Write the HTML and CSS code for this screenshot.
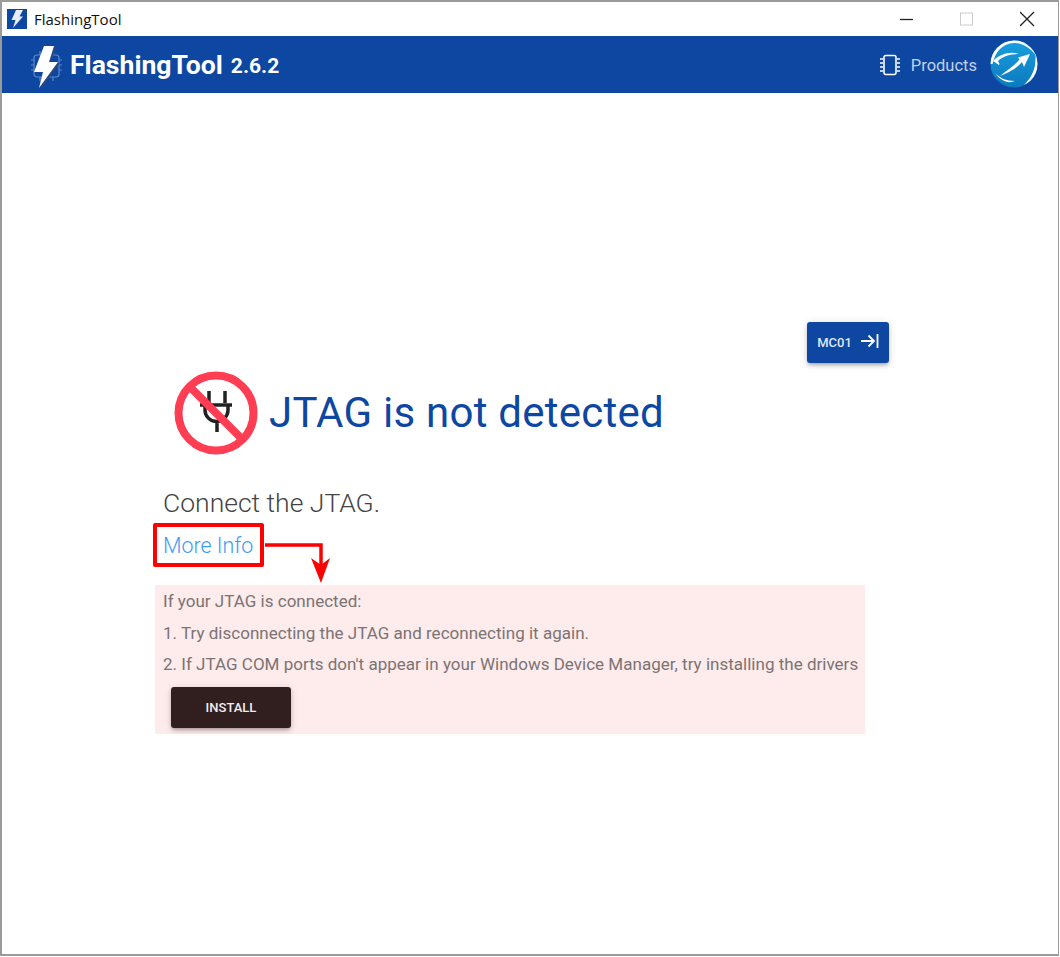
FILE: index.html
```html
<!DOCTYPE html>
<html lang="en">
<head>
<meta charset="utf-8">
<title>FlashingTool</title>
<link rel="stylesheet" href="styles.css">
</head>
<body>
<div class="window">
  <div class="titlebar">
    <svg class="title-icon" viewBox="0 0 20 20"><rect width="20" height="20" fill="#0d47a1"/><path d="M9 1h7l-3.500 6.500H16L6 19l2.500-8H4.500z" fill="#e8edf5"/></svg>
    <span class="title-text">FlashingTool</span>
    <div class="controls">
      <svg class="ctl" viewBox="0 0 60 34"><path d="M0 17.500h13" stroke="#222" stroke-width="1.300" fill="none"/></svg>
      <svg class="ctl" viewBox="0 0 60 34"><rect x=".5" y="11" width="12" height="12" stroke="#ccc" fill="none"/></svg>
      <svg class="ctl ctl-close" viewBox="0 0 26 34"><path d="M0 10l14 14M14 10 0 24" stroke="#222" stroke-width="1.300" fill="none"/></svg>
    </div>
  </div>
  <header class="appbar">
    <svg class="logo" viewBox="0 0 32 46">
      <g stroke="#5f88c6" stroke-width="1.200" fill="none"><rect x="3" y="12" width="25" height="22" rx="3"/><path d="M0 17h3M0 22h3M0 27h3M28 17h3M28 22h3M28 27h3M9 8v4M15 8v4M22 8v4M9 34v4M15 34v4M22 34v4"/></g>
      <path d="M15 3.500h10L20 19.500 29 20 10.500 45.500 13.500 29.500 6 29z" fill="#29497f"/>
      <path d="M13 3h10l-5 16h9L8 45l4-16H3z" fill="#fff"/>
    </svg>
    <span class="brand">FlashingTool</span>
    <span class="version">2.6.2</span>
    <div class="spacer"></div>
    <svg class="chip" viewBox="0 0 22 22"><rect x="5" y="1.500" width="12" height="19" rx="2" fill="none" stroke="#fff" stroke-width="1.600"/><path d="M1 5h3M1 9h3M1 13h3M1 17h3M18 5h3M18 9h3M18 13h3M18 17h3" stroke="#fff" stroke-width="1.600"/></svg>
    <span class="products">Products</span>
    <svg class="globe" viewBox="0 0 48 48">
      <defs>
        <clipPath id="gc"><circle cx="24" cy="24" r="23.500"/></clipPath>
        <linearGradient id="gg" x1="0" y1="0" x2="0" y2="1"><stop offset="0" stop-color="#18a0e0"/><stop offset="1" stop-color="#0c79bd"/></linearGradient>
      </defs>
      <circle cx="24" cy="24" r="23.500" fill="url(#gg)"/>
      <g clip-path="url(#gc)" fill="#fff">
        <path d="M0 24C1 8 14-1 28 0 38 1 46 9 48 20 44 10 35 4 26 3 13 2 5 12 2.500 24z"/>
        <path d="M46 12c3 8 3 20-3 27-3 3-6 5-9 6 6-6 10-13 11-20 .5-5 .5-9 1-13z"/>
        <path d="M3 21C10 14 20 11 29 14 21 14 13 16 8 21 9 23 10 24 9 25 7 24 5 22 3 21z"/>
        <path d="M40 14 34 27 32 22C26 29 18 33 10 36 17 30 24 26 29.500 19.500L28 17.500z"/>
        <path d="M5 33C10 38 16 41 25 41 18 44 11 41 5 33z"/>
      </g>
    </svg>
  </header>
  <main class="content">
    <div class="next-row">
      <button class="next-btn" type="button">MC01
        <svg class="next-icon" viewBox="0 0 18 14"><path d="M0 7h12M7.500 1.500 13 7l-5.500 5.500M16.500 0v14" fill="none" stroke="#fff" stroke-width="1.800"/></svg>
      </button>
    </div>
    <div class="status">
      <svg class="noplug" viewBox="0 0 84 84">
        <g fill="none" stroke="#222" stroke-width="3.500">
          <path d="M35 20v12M51 20v12M26 34h32M31 34v5a11.500 11.500 0 0 0 23 0v-5M43 50v11"/>
        </g>
        <circle cx="42" cy="42" r="37.500" fill="none" stroke="#ff3d53" stroke-width="8"/>
        <path d="M16 16l52 52" stroke="#ff3d53" stroke-width="8"/>
      </svg>
      <h1 class="status-title">JTAG is not detected</h1>
    </div>
    <p class="hint">Connect the JTAG.</p>
    <div class="more-wrap">
      <a class="more" href="#">More Info</a>
      <svg class="arrow" viewBox="0 0 66 42"><path d="M0 2H56V30" fill="none" stroke="#f00" stroke-width="3.500"/><path d="M46 15 56 22 65 15 56 40z" fill="#f00"/></svg>
    </div>
    <section class="info">
      <p class="info-line">If your JTAG is connected:</p>
      <p class="info-line">1. Try disconnecting the JTAG and reconnecting it again.</p>
      <p class="info-line">2. If JTAG COM ports don't appear in your Windows Device Manager, try installing the drivers</p>
      <button class="install" type="button">INSTALL</button>
    </section>
  </main>
</div>
</body>
</html>
```
FILE: styles.css
```css
* { box-sizing: border-box; }
html, body { margin: 0; height: 100%; background: #fff; }
.window {
  width: 1059px;
  height: 956px;
  border: 2px solid #9b9b9b;
  border-right-width: 1px;
  display: flex;
  flex-direction: column;
  font-family: Roboto, sans-serif;
  overflow: hidden;
}
.titlebar {
  height: 34px;
  flex: none;
  display: flex;
  align-items: center;
  padding-left: 5px;
  background: #fff;
}
.title-icon { width: 20px; height: 20px; }
.title-text {
  margin-left: 7px;
  font: 15px "Open Sans", sans-serif;
  color: #111;
}
.controls { margin-left: auto; display: flex; padding-right: 24px; }
.ctl { width: 60px; height: 34px; display: block; }
.ctl-close { width: 26px; margin-right: -12px; }
.appbar {
  height: 57px;
  flex: none;
  background: #0d47a1;
  display: flex;
  align-items: center;
  padding: 0 20px 0 29px;
  color: #fff;
}
.logo { width: 32px; height: 46px; margin-top: 2px; }
.brand { margin-left: 7px; font-size: 26.600px; font-weight: 700; }
.version { margin-left: 8px; font-size: 21px; font-weight: 700; margin-top: 2px; }
.spacer { flex: 1; }
.chip { width: 22px; height: 22px; }
.products { margin-left: 10px; font-size: 16.500px; color: #c2d1e8; margin-top: 1px; }
.globe { width: 48px; height: 48px; margin-left: 13px; margin-top: -1px; }
.content { flex: 1; padding: 229px 0 0 153px; width: 887px; }
.next-row { display: flex; justify-content: flex-end; }
.next-btn {
  width: 82px;
  height: 41px;
  border: 0;
  border-radius: 3px;
  background: #0d47a1;
  color: #dfe7f3;
  font: 500 13px Roboto, sans-serif;
  display: flex;
  align-items: center;
  justify-content: center;
  gap: 9px;
  box-shadow: 0 3px 3px -2px rgba(0,0,0,.2), 0 3px 4px rgba(0,0,0,.14), 0 1px 8px rgba(0,0,0,.12);
}
.next-icon { width: 18px; height: 14px; margin-top: -3px; }
.status { display: flex; align-items: center; margin: 8px 0 0 19px; }
.noplug { width: 84px; height: 84px; flex: none; }
.status-title { margin: -2px 0 0 11px; font-size: 42px; font-weight: 400; color: #0d47a1; letter-spacing: .24px; }
.hint { margin: 33px 0 0 8px; font-size: 26.500px; font-weight: 300; line-height: 30px; color: #444; }
.more-wrap { position: relative; height: 44px; margin-top: 5px; width: 240px; }
.more {
  position: absolute;
  left: -2px;
  top: 0;
  width: 111px;
  height: 44px;
  border: 4px solid #f00;
  border-radius: 2px;
  padding-left: 6px;
  font-size: 21.400px;
  font-weight: 300;
  line-height: 38px;
  color: #3f9bef;
  text-decoration: none;
}
.arrow { position: absolute; left: 110px; top: 20px; width: 66px; height: 42px; overflow: visible; }
.info {
  width: 710px;
  height: 149px;
  margin-top: 18px;
  padding: 1px 0 0 8px;
  background: #feebeb;
}
.info-line { margin: 0; font-size: 17px; font-weight: 400; line-height: 31.500px; color: #7a7474; letter-spacing: .015px; }
.install {
  display: block;
  width: 120px;
  height: 41px;
  margin: 6px 0 0 8px;
  border: 0;
  border-radius: 3px;
  background: #311f20;
  color: #eee;
  font: 500 13px Roboto, sans-serif;
  box-shadow: 0 3px 3px -2px rgba(0,0,0,.2), 0 3px 4px rgba(0,0,0,.14), 0 1px 8px rgba(0,0,0,.12);
}
```
